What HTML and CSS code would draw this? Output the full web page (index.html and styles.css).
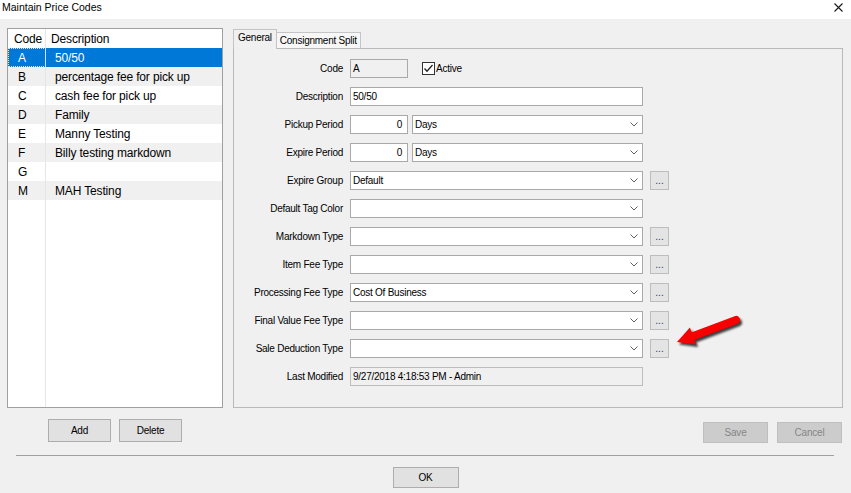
FILE: index.html
```html
<!DOCTYPE html>
<html>
<head>
<meta charset="utf-8">
<title>Maintain Price Codes</title>
<link rel="stylesheet" href="styles.css">
</head>
<body>
<div class="titlebar">
  <span class="title">Maintain Price Codes</span>
  <svg class="close" width="9" height="9" viewBox="0 0 9 9"><path d="M0.5 0.5L8.5 8.5M8.5 0.5L0.5 8.5" stroke="#1a1a1a" stroke-width="1.1"/></svg>
</div>
<div class="content">
  <div class="leftcol">
    <div class="list">
      <div class="lhead"><div class="c1">Code</div><div class="c2">Description</div></div>
      <div class="row sel"><div class="c1">A</div><div class="c2">50/50</div></div>
      <div class="row alt"><div class="c1">B</div><div class="c2">percentage fee for pick up</div></div>
      <div class="row"><div class="c1">C</div><div class="c2">cash fee for pick up</div></div>
      <div class="row alt"><div class="c1">D</div><div class="c2">Family</div></div>
      <div class="row"><div class="c1">E</div><div class="c2">Manny Testing</div></div>
      <div class="row alt"><div class="c1">F</div><div class="c2">Billy testing markdown</div></div>
      <div class="row"><div class="c1">G</div><div class="c2"></div></div>
      <div class="row alt"><div class="c1">M</div><div class="c2">MAH Testing</div></div>
    </div>
    <div class="lbtns">
      <button class="btn">Add</button>
      <button class="btn">Delete</button>
    </div>
  </div>
  <div class="rightcol">
    <div class="tabs">
      <div class="tab active">General</div>
      <div class="tab">Consignment Split</div>
    </div>
    <div class="panel">
      <div class="form">
        <div class="lbl">Code</div>
        <div class="fgroup">
          <div class="field code">A</div>
          <div class="check">
            <svg width="13" height="13" viewBox="0 0 13 13"><rect x="0.5" y="0.5" width="12" height="12" fill="#fff" stroke="#333"/><polyline points="2.5,6.5 5,9.2 10.5,3" fill="none" stroke="#222" stroke-width="1.3"/></svg>
            <span>Active</span>
          </div>
        </div>

        <div class="lbl">Description</div>
        <div class="field">50/50</div>

        <div class="lbl">Pickup Period</div>
        <div class="fgroup">
          <div class="field num">0</div>
          <div class="field select days"><span>Days</span><svg class="chev" width="8" height="5" viewBox="0 0 8 5"><polyline points="0.5,0.5 4,4 7.5,0.5" fill="none" stroke="#606060" stroke-width="1"/></svg></div>
        </div>

        <div class="lbl">Expire Period</div>
        <div class="fgroup">
          <div class="field num">0</div>
          <div class="field select days"><span>Days</span><svg class="chev" width="8" height="5" viewBox="0 0 8 5"><polyline points="0.5,0.5 4,4 7.5,0.5" fill="none" stroke="#606060" stroke-width="1"/></svg></div>
        </div>

        <div class="lbl">Expire Group</div>
        <div class="field select"><span>Default</span><svg class="chev" width="8" height="5" viewBox="0 0 8 5"><polyline points="0.5,0.5 4,4 7.5,0.5" fill="none" stroke="#606060" stroke-width="1"/></svg></div>
        <div class="dots">...</div>

        <div class="lbl">Default Tag Color</div>
        <div class="field select"><span></span><svg class="chev" width="8" height="5" viewBox="0 0 8 5"><polyline points="0.5,0.5 4,4 7.5,0.5" fill="none" stroke="#606060" stroke-width="1"/></svg></div>

        <div class="lbl">Markdown Type</div>
        <div class="field select"><span></span><svg class="chev" width="8" height="5" viewBox="0 0 8 5"><polyline points="0.5,0.5 4,4 7.5,0.5" fill="none" stroke="#606060" stroke-width="1"/></svg></div>
        <div class="dots">...</div>

        <div class="lbl">Item Fee Type</div>
        <div class="field select"><span></span><svg class="chev" width="8" height="5" viewBox="0 0 8 5"><polyline points="0.5,0.5 4,4 7.5,0.5" fill="none" stroke="#606060" stroke-width="1"/></svg></div>
        <div class="dots">...</div>

        <div class="lbl">Processing Fee Type</div>
        <div class="field select"><span>Cost Of Business</span><svg class="chev" width="8" height="5" viewBox="0 0 8 5"><polyline points="0.5,0.5 4,4 7.5,0.5" fill="none" stroke="#606060" stroke-width="1"/></svg></div>
        <div class="dots">...</div>

        <div class="lbl">Final Value Fee Type</div>
        <div class="field select"><span></span><svg class="chev" width="8" height="5" viewBox="0 0 8 5"><polyline points="0.5,0.5 4,4 7.5,0.5" fill="none" stroke="#606060" stroke-width="1"/></svg></div>
        <div class="dots">...</div>

        <div class="lbl">Sale Deduction Type</div>
        <div class="field select"><span></span><svg class="chev" width="8" height="5" viewBox="0 0 8 5"><polyline points="0.5,0.5 4,4 7.5,0.5" fill="none" stroke="#606060" stroke-width="1"/></svg></div>
        <div class="dots">...</div>

        <div class="lbl">Last Modified</div>
        <div class="field ro">9/27/2018 4:18:53 PM - Admin</div>
      </div>
      <svg class="arrow" width="80" height="50" viewBox="0 0 80 50">
        <defs>
          <filter id="sh" x="-30%" y="-30%" width="160%" height="160%"><feGaussianBlur stdDeviation="1.3"/></filter>
        </defs>
        <g filter="url(#sh)" opacity="0.75" transform="translate(2,2.5)">
          <path d="M66 15 L22 31.5" stroke="#000" stroke-width="8" stroke-linecap="round" fill="none"/>
          <polygon points="7,37 19.9,22.6 26.1,39.4" fill="#000"/>
        </g>
        <path d="M66 15 L22 31.5" stroke="#f80000" stroke-width="8" stroke-linecap="round" fill="none"/>
        <polygon points="7,37 19.9,22.6 26.1,39.4" fill="#f80000"/>
      </svg>
    </div>
    <div class="rbtns">
      <button class="btn dis">Save</button>
      <button class="btn dis">Cancel</button>
    </div>
  </div>
</div>
<div class="sep"></div>
<div class="footer">
  <button class="btn ok">OK</button>
</div>
</body>
</html>
```

FILE: styles.css
```css
html, body {
  margin: 0;
  padding: 0;
}
body {
  width: 851px;
  height: 493px;
  overflow: hidden;
  background: #f0f0f0;
  font-family: "Liberation Sans", Arial, sans-serif;
  color: #000;
}

.titlebar {
  height: 19px;
  background: #fff;
  display: flex;
  justify-content: space-between;
  align-items: flex-start;
}
.title {
  font-size: 10.5px;
  line-height: 15px;
  padding-left: 2px;
}
.close {
  margin: 3px 8px 0 0;
}

.content {
  display: flex;
  gap: 10px;
  padding: 9px 8px 0 7px;
}

.leftcol {
  width: 216px;
}
.list {
  height: 380px;
  box-sizing: border-box;
  border: 1px solid #a0a0a0;
  background: #fff linear-gradient(#e6e6e6, #e6e6e6) 37px 0 / 1px 100% no-repeat;
  font-size: 12px;
  letter-spacing: -0.15px;
}
.lhead, .row {
  display: flex;
  height: 19px;
  line-height: 21px;
  overflow: hidden;
}
.lhead {
  background: #fff;
}
.c1 {
  width: 38px;
  box-sizing: border-box;
  border-right: 1px solid #e6e6e6;
}
.c2 {
  flex: 1;
}
.lhead .c1 { padding-left: 6px; }
.lhead .c2 { padding-left: 5px; }
.row .c1 { padding-left: 10px; }
.row .c2 { padding-left: 9px; }
.row.alt {
  background: #f0f0f0;
}
.row.sel {
  background: #0078d7;
  color: #fff;
}
.row.sel .c1 {
  outline: 1px dotted #d8e8f8;
  outline-offset: -1px;
  border-right-color: #cfe3f6;
}

.btn {
  box-sizing: border-box;
  background: #e1e1e1;
  border: 1px solid #adadad;
  font-family: "Liberation Sans", Arial, sans-serif;
  font-size: 10px;
  letter-spacing: -0.2px;
  color: #000;
  padding: 0;
  margin: 0;
}
.lbtns {
  display: flex;
  gap: 8px;
  margin: 11px 0 0 41px;
}
.lbtns .btn {
  width: 63px;
  height: 23px;
}

.rightcol {
  width: 610px;
  padding-top: 1px;
}
.tabs {
  display: flex;
  align-items: flex-end;
  height: 19px;
  position: relative;
  z-index: 1;
  font-size: 10px;
  letter-spacing: -0.25px;
}
.tab {
  height: 16px;
  box-sizing: border-box;
  line-height: 15px;
  padding: 0 3px;
  border: 1px solid #c4c4c4;
  border-bottom: none;
  background: #f7f7f7;
}
.tab + .tab {
  border-left: none;
}
.tab.active {
  height: 20px;
  margin-bottom: -1px;
  line-height: 16px;
  padding: 0 4px;
  background: #f0f0f0;
}
.panel {
  position: relative;
  height: 360px;
  box-sizing: border-box;
  border: 1px solid #b9b9b9;
  padding-top: 5px;
}

.form {
  display: grid;
  grid-template-columns: 109px 293px 19px;
  grid-auto-rows: 28px;
  column-gap: 7px;
  align-items: center;
  font-size: 10px;
  letter-spacing: -0.25px;
}
.lbl {
  grid-column: 1;
  text-align: right;
}
.field, .fgroup {
  grid-column: 2;
}
.dots {
  grid-column: 3;
}
.fgroup {
  display: flex;
  align-items: center;
}
.field {
  height: 19px;
  box-sizing: border-box;
  border: 1px solid #a9a9a9;
  background: #fff;
  line-height: 17px;
  padding-left: 2px;
  white-space: nowrap;
  overflow: hidden;
}
.field.select {
  display: flex;
  justify-content: space-between;
  align-items: center;
  padding-right: 4px;
}
.chev {
  flex: none;
}
.field.code {
  width: 58px;
  background: #f0f0f0;
}
.check {
  display: flex;
  align-items: center;
  gap: 1px;
  margin-left: 14px;
}
.field.num {
  width: 58px;
  text-align: right;
  padding-right: 5px;
}
.field.days {
  width: 231px;
  margin-left: 4px;
}
.field.ro {
  background: #f0f0f0;
  border-color: #bdbdbd;
}
.dots {
  width: 19px;
  height: 19px;
  box-sizing: border-box;
  border: 1px solid #bdbdbd;
  background: #e4e4e4;
  color: #2a3a6a;
  text-align: center;
  line-height: 17px;
  letter-spacing: 0;
}

.arrow {
  position: absolute;
  left: 436px;
  top: 256px;
}

.rbtns {
  display: flex;
  justify-content: flex-end;
  gap: 9px;
  margin-top: 14px;
  padding-right: 1px;
}
.btn.dis {
  width: 65px;
  height: 21px;
  background: #cccccc;
  border-color: #bfbfbf;
  color: #868686;
}

.sep {
  margin: 12px 0 0 16px;
  width: 818px;
  height: 1px;
  background: #a0a0a0;
}
.footer {
  display: flex;
  justify-content: center;
  padding-top: 11px;
}
.btn.ok {
  width: 66px;
  height: 21px;
}
```
